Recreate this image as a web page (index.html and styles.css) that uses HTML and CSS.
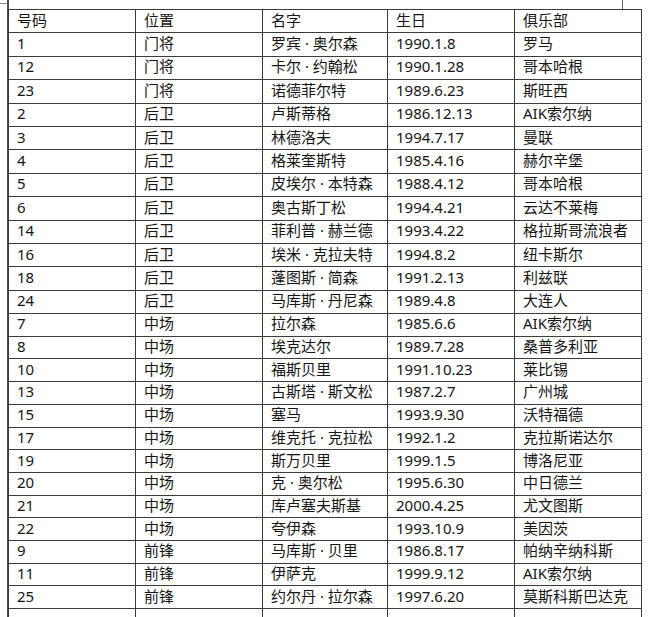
FILE: index.html
```html
<!DOCTYPE html>
<html lang="zh">
<head>
<meta charset="utf-8">
<title>球员名单</title>
<link rel="stylesheet" href="styles.css">
</head>
<body>
<div class="page">
  <div class="gutter"><div class="gutter-tick"></div></div>
  <div class="sheet">
    <div class="top-strip"></div>
    <table class="roster">
      <colgroup>
        <col class="c1"><col class="c2"><col class="c3"><col class="c4"><col class="c5">
      </colgroup>
      <tbody>
        <tr class="tall"><td>号码</td><td>位置</td><td>名字</td><td>生日</td><td>俱乐部</td></tr>
        <tr class="tall"><td>1</td><td>门将</td><td>罗宾 · 奥尔森</td><td>1990.1.8</td><td>罗马</td></tr>
        <tr class="tall"><td>12</td><td>门将</td><td>卡尔 · 约翰松</td><td>1990.1.28</td><td>哥本哈根</td></tr>
        <tr class="tall"><td>23</td><td>门将</td><td>诺德菲尔特</td><td>1989.6.23</td><td>斯旺西</td></tr>
        <tr class="tall"><td>2</td><td>后卫</td><td>卢斯蒂格</td><td>1986.12.13</td><td>AIK索尔纳</td></tr>
        <tr class="tall"><td>3</td><td>后卫</td><td>林德洛夫</td><td>1994.7.17</td><td>曼联</td></tr>
        <tr class="tall"><td>4</td><td>后卫</td><td>格莱奎斯特</td><td>1985.4.16</td><td>赫尔辛堡</td></tr>
        <tr class="tall"><td>5</td><td>后卫</td><td>皮埃尔 · 本特森</td><td>1988.4.12</td><td>哥本哈根</td></tr>
        <tr class="tall"><td>6</td><td>后卫</td><td>奥古斯丁松</td><td>1994.4.21</td><td>云达不莱梅</td></tr>
        <tr class="tall"><td>14</td><td>后卫</td><td>菲利普 · 赫兰德</td><td>1993.4.22</td><td>格拉斯哥流浪者</td></tr>
        <tr class="tall"><td>16</td><td>后卫</td><td>埃米 · 克拉夫特</td><td>1994.8.2</td><td>纽卡斯尔</td></tr>
        <tr class="tall"><td>18</td><td>后卫</td><td>蓬图斯 · 简森</td><td>1991.2.13</td><td>利兹联</td></tr>
        <tr class="tall"><td>24</td><td>后卫</td><td>马库斯 · 丹尼森</td><td>1989.4.8</td><td>大连人</td></tr>
        <tr><td>7</td><td>中场</td><td>拉尔森</td><td>1985.6.6</td><td>AIK索尔纳</td></tr>
        <tr><td>8</td><td>中场</td><td>埃克达尔</td><td>1989.7.28</td><td>桑普多利亚</td></tr>
        <tr><td>10</td><td>中场</td><td>福斯贝里</td><td>1991.10.23</td><td>莱比锡</td></tr>
        <tr><td>13</td><td>中场</td><td>古斯塔 · 斯文松</td><td>1987.2.7</td><td>广州城</td></tr>
        <tr><td>15</td><td>中场</td><td>塞马</td><td>1993.9.30</td><td>沃特福德</td></tr>
        <tr><td>17</td><td>中场</td><td>维克托 · 克拉松</td><td>1992.1.2</td><td>克拉斯诺达尔</td></tr>
        <tr><td>19</td><td>中场</td><td>斯万贝里</td><td>1999.1.5</td><td>博洛尼亚</td></tr>
        <tr><td>20</td><td>中场</td><td>克 · 奥尔松</td><td>1995.6.30</td><td>中日德兰</td></tr>
        <tr><td>21</td><td>中场</td><td>库卢塞夫斯基</td><td>2000.4.25</td><td>尤文图斯</td></tr>
        <tr><td>22</td><td>中场</td><td>夸伊森</td><td>1993.10.9</td><td>美因茨</td></tr>
        <tr><td>9</td><td>前锋</td><td>马库斯 · 贝里</td><td>1986.8.17</td><td>帕纳辛纳科斯</td></tr>
        <tr><td>11</td><td>前锋</td><td>伊萨克</td><td>1999.9.12</td><td>AIK索尔纳</td></tr>
        <tr><td>25</td><td>前锋</td><td>约尔丹 · 拉尔森</td><td>1997.6.20</td><td>莫斯科斯巴达克</td></tr>
        <tr><td></td><td></td><td></td><td></td><td></td></tr>
      </tbody>
    </table>
  </div>
</div>
</body>
</html>
```
FILE: styles.css
```css
html, body {
  margin: 0;
  padding: 0;
  background: #ffffff;
  overflow: hidden;
}

body {
  width: 650px;
  height: 617px;
  font-family: "Noto Sans", "Noto Sans CJK SC", sans-serif;
  color: #151515;
}

.page {
  display: flex;
  height: 617px;
  overflow: hidden;
}

.gutter {
  width: 7px;
  flex: none;
}

.gutter-tick {
  height: 3px;
  border-bottom: 1px solid #8a8a8a;
}

.sheet {
  flex: none;
  border-left: 2px solid #4a4a4a;
  width: 633px;
}

.top-strip {
  width: 613px;
  height: 9px;
  border-right: 1px solid #666;
}

.roster {
  border-collapse: collapse;
  table-layout: fixed;
  width: 633px;
  margin-left: -1px;
}

.c1 { width: 127px; }
.c2 { width: 127px; }
.c3 { width: 125px; }
.c4 { width: 127px; }
.c5 { width: 127px; }

.roster td {
  border: 1px solid #3c3c3c;
  height: 19.7px;
  padding: 0 8px 2px;
  font-size: 15px;
  line-height: 19px;
  white-space: nowrap;
  overflow: hidden;
  vertical-align: middle;
}

.roster tr.tall td {
  height: 20.4px;
}
```
